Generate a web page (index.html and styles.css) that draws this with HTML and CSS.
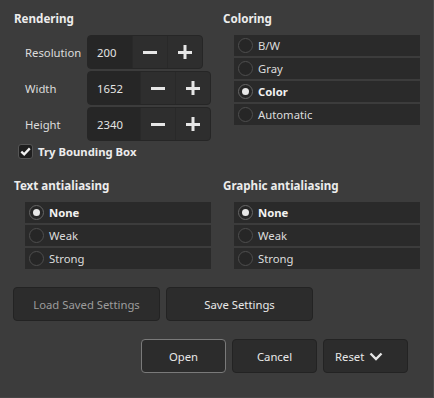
FILE: index.html
```html
<!DOCTYPE html>
<html lang="en">

    <head>
        <meta charset="UTF-8">
        <meta name="viewport" content="width=device-width, initial-scale=1.0">
        <title>Render Settings</title>
        <link rel="stylesheet" href="styles.css">
    </head>

    <body>
        <div class="dialog">

            <div class="section">
                <div class="col">
                    <div class="title">Rendering</div>
                    <div class="spin-row">
                        <span class="spin-label">Resolution</span>
                        <div class="spin">
                            <span class="spin-value short">200</span>
                            <span class="spin-btn"><svg width="14" height="14" viewBox="0 0 14 14"><path d="M0 7.5H14" stroke="#e6e6e6" stroke-width="3"/></svg></span>
                            <span class="spin-btn"><svg width="14" height="14" viewBox="0 0 14 14"><path d="M0 7.5H14M7 0V14" stroke="#e6e6e6" stroke-width="3"/></svg></span>
                        </div>
                    </div>
                    <div class="spin-row">
                        <span class="spin-label">Width</span>
                        <div class="spin">
                            <span class="spin-value">1652</span>
                            <span class="spin-btn"><svg width="14" height="14" viewBox="0 0 14 14"><path d="M0 7.5H14" stroke="#e6e6e6" stroke-width="3"/></svg></span>
                            <span class="spin-btn"><svg width="14" height="14" viewBox="0 0 14 14"><path d="M0 7.5H14M7 0V14" stroke="#e6e6e6" stroke-width="3"/></svg></span>
                        </div>
                    </div>
                    <div class="spin-row">
                        <span class="spin-label">Height</span>
                        <div class="spin">
                            <span class="spin-value">2340</span>
                            <span class="spin-btn"><svg width="14" height="14" viewBox="0 0 14 14"><path d="M0 7.5H14" stroke="#e6e6e6" stroke-width="3"/></svg></span>
                            <span class="spin-btn"><svg width="14" height="14" viewBox="0 0 14 14"><path d="M0 7.5H14M7 0V14" stroke="#e6e6e6" stroke-width="3"/></svg></span>
                        </div>
                    </div>
                    <div class="check">
                        <span class="check-box"><svg width="11" height="11" viewBox="0 0 11 11"><path d="M1.3 5.6L4.2 8.4L9.8 2.4" fill="none" stroke="#f2f2f2" stroke-width="2.3"/></svg></span>
                        Try Bounding Box
                    </div>
                </div>
                <div class="col">
                    <div class="title">Coloring</div>
                    <div class="radios">
                        <div class="radio"><span class="dot"></span>B/W</div>
                        <div class="radio"><span class="dot"></span>Gray</div>
                        <div class="radio on"><span class="dot"></span>Color</div>
                        <div class="radio"><span class="dot"></span>Automatic</div>
                    </div>
                </div>
            </div>

            <div class="section second">
                <div class="col">
                    <div class="title">Text antialiasing</div>
                    <div class="radios">
                        <div class="radio on"><span class="dot"></span>None</div>
                        <div class="radio"><span class="dot"></span>Weak</div>
                        <div class="radio"><span class="dot"></span>Strong</div>
                    </div>
                </div>
                <div class="col">
                    <div class="title">Graphic antialiasing</div>
                    <div class="radios">
                        <div class="radio on"><span class="dot"></span>None</div>
                        <div class="radio"><span class="dot"></span>Weak</div>
                        <div class="radio"><span class="dot"></span>Strong</div>
                    </div>
                </div>
            </div>

            <div class="settings-row">
                <button class="btn wide dim">Load Saved Settings</button>
                <button class="btn wide">Save Settings</button>
            </div>

            <div class="action-row">
                <button class="btn default">Open</button>
                <button class="btn">Cancel</button>
                <button class="btn reset">Reset
                    <svg width="14" height="9" viewBox="0 0 14 9"><path d="M1.5 1.5L7 7L12.5 1.5" fill="none" stroke="#e6e6e6" stroke-width="2.4"/></svg>
                </button>
            </div>

        </div>
    </body>

</html>
```

FILE: styles.css
```css
body {
    margin: 0;
    padding: 0;
    background-color: #3c3c3c;
}

.dialog {
    width: 434px;
    height: 398px;
    box-sizing: border-box;
    background-color: #3c3c3c;
    border-right: 1px solid #4a4a4a;
    border-bottom: 1px solid #454545;
    font-family: "Noto Sans", "Open Sans", sans-serif;
    font-size: 11.3px;
    color: #dcdcdc;
    padding-top: 11px;
}

.section {
    display: grid;
    grid-template-columns: 209px 1fr;
    padding-left: 14px;
}

.second {
    margin-top: 18px;
}

.title {
    font-weight: 700;
    font-size: 11.6px;
    line-height: 16px;
    color: #ececec;
    margin-bottom: 8px;
}

.spin-row {
    display: flex;
    align-items: center;
    margin-bottom: 2px;
}

.spin-label {
    flex: none;
    width: 73px;
    padding-left: 11px;
    box-sizing: border-box;
}

.spin {
    flex: none;
    display: flex;
    height: 34px;
    box-sizing: border-box;
    background-color: #2e2e2e;
    border: 1px solid #262626;
    border-radius: 4px;
    overflow: hidden;
}

.spin-value {
    width: 52px;
    background-color: #262626;
    padding-left: 9px;
    box-sizing: border-box;
    display: flex;
    align-items: center;
    color: #e4e4e4;
}

.spin-value.short {
    width: 44px;
}

.spin-btn {
    width: 35px;
    display: flex;
    align-items: center;
    justify-content: center;
    border-left: 1px solid #292929;
    box-sizing: border-box;
}

.check {
    display: flex;
    align-items: center;
    gap: 5px;
    margin-top: 2px;
    margin-left: 4px;
    height: 17px;
    font-weight: 700;
    color: #ececec;
}

.check-box {
    width: 15px;
    height: 15px;
    box-sizing: border-box;
    background-color: #1e1e1e;
    border: 1px solid #555;
    border-radius: 3px;
    display: flex;
    align-items: center;
    justify-content: center;
}

.radios {
    display: flex;
    flex-direction: column;
    gap: 2px;
    margin-left: 11px;
    width: 186px;
}

.radio {
    height: 21px;
    background-color: #2a2a2a;
    display: flex;
    align-items: center;
    padding-left: 4px;
    gap: 5px;
    color: #dcdcdc;
}

.dot {
    width: 15px;
    height: 15px;
    box-sizing: border-box;
    border: 1px solid #4e4e4e;
    border-radius: 50%;
    background-color: #262626;
    display: flex;
    align-items: center;
    justify-content: center;
}

.radio.on {
    font-weight: 700;
    color: #f2f2f2;
}

.radio.on .dot {
    border-color: #666;
}

.radio.on .dot::after {
    content: "";
    width: 7px;
    height: 7px;
    border-radius: 50%;
    background-color: #e8e8e8;
}

.settings-row {
    display: flex;
    gap: 6px;
    padding-left: 13px;
    margin-top: 18px;
}

.action-row {
    display: flex;
    gap: 6px;
    justify-content: flex-end;
    padding-right: 25px;
    margin-top: 18px;
}

.btn {
    width: 85px;
    height: 34px;
    background-color: #2c2c2c;
    border: 1px solid #232323;
    border-radius: 4px;
    font-family: "Noto Sans", "Open Sans", sans-serif;
    font-size: 11.3px;
    color: #e8e8e8;
    padding: 0;
}

.btn.wide {
    width: 147px;
}

.btn.dim {
    color: #9c9c9c;
}

.btn.default {
    border-color: #7a7a7a;
}

.btn.reset {
    display: flex;
    align-items: center;
    padding-left: 11px;
    gap: 5px;
}
```
